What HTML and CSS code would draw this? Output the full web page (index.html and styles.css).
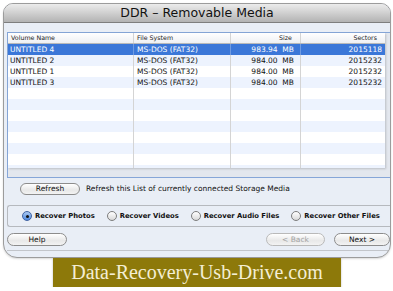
FILE: index.html
```html
<!DOCTYPE html>
<html lang="en">
<head>
    <meta charset="UTF-8">
    <title>DDR - Removable Media</title>
    <link rel="stylesheet" href="styles.css">
</head>
<body>
    <div class="window">
        <div class="titlebar">DDR &ndash; Removable Media</div>
        <div class="content">
            <div class="list-frame">
                <div class="list">
                    <div class="row head">
                        <div class="cell">Volume Name</div>
                        <div class="cell">File System</div>
                        <div class="cell num">Size</div>
                        <div class="cell num last">Sectors</div>
                    </div>
                    <div class="rows">
                        <div class="row selected">
                            <div class="cell">UNTITLED 4</div>
                            <div class="cell">MS-DOS (FAT32)</div>
                            <div class="cell num">983.94  MB</div>
                            <div class="cell num last">2015118</div>
                        </div>
                        <div class="row">
                            <div class="cell">UNTITLED 2</div>
                            <div class="cell">MS-DOS (FAT32)</div>
                            <div class="cell num">984.00  MB</div>
                            <div class="cell num last">2015232</div>
                        </div>
                        <div class="row">
                            <div class="cell">UNTITLED 1</div>
                            <div class="cell">MS-DOS (FAT32)</div>
                            <div class="cell num">984.00  MB</div>
                            <div class="cell num last">2015232</div>
                        </div>
                        <div class="row">
                            <div class="cell">UNTITLED 3</div>
                            <div class="cell">MS-DOS (FAT32)</div>
                            <div class="cell num">984.00  MB</div>
                            <div class="cell num last">2015232</div>
                        </div>
                        <div class="row"><div class="cell"></div><div class="cell"></div><div class="cell"></div><div class="cell last"></div></div>
                        <div class="row"><div class="cell"></div><div class="cell"></div><div class="cell"></div><div class="cell last"></div></div>
                        <div class="row"><div class="cell"></div><div class="cell"></div><div class="cell"></div><div class="cell last"></div></div>
                        <div class="row"><div class="cell"></div><div class="cell"></div><div class="cell"></div><div class="cell last"></div></div>
                        <div class="row"><div class="cell"></div><div class="cell"></div><div class="cell"></div><div class="cell last"></div></div>
                        <div class="row"><div class="cell"></div><div class="cell"></div><div class="cell"></div><div class="cell last"></div></div>
                        <div class="row"><div class="cell"></div><div class="cell"></div><div class="cell"></div><div class="cell last"></div></div>
                        <div class="row"><div class="cell"></div><div class="cell"></div><div class="cell"></div><div class="cell last"></div></div>
                    </div>
                </div>
            </div>

            <div class="refresh-row">
                <button class="btn refresh">Refresh</button>
                <span class="hint">Refresh this List of currently connected Storage Media</span>
            </div>

            <div class="options">
                <label class="option"><span class="radio checked"></span>Recover Photos</label>
                <label class="option"><span class="radio"></span>Recover Videos</label>
                <label class="option"><span class="radio"></span>Recover Audio Files</label>
                <label class="option"><span class="radio"></span>Recover Other Files</label>
            </div>

            <div class="nav">
                <button class="btn help">Help</button>
                <div class="nav-right">
                    <button class="btn back" disabled>&lt; Back</button>
                    <button class="btn next">Next &gt;</button>
                </div>
            </div>
            <div class="footer-line"></div>
        </div>
    </div>
    <div class="banner">Data-Recovery-Usb-Drive.com</div>
</body>
</html>
```
FILE: styles.css
```css
body {
    margin: 0;
    padding: 3px 0 0 3px;
    background-color: #fff;
    font-family: "DejaVu Sans", sans-serif;
}

.window {
    width: 386px;
    height: 253px;
    border: 1px solid #9c9c9c;
    border-radius: 10px 10px 14px 14px;
    background-color: #e9eef6;
    overflow: hidden;
    box-shadow: 0 1px 2px rgba(0, 0, 0, 0.15);
}

.titlebar {
    height: 18px;
    line-height: 18px;
    text-align: center;
    font-size: 12.5px;
    color: #111;
    background: linear-gradient(#ececec, #b3b3b3);
    border-bottom: 1px solid #7e7e7e;
}

.content {
    padding: 9px 0 0 3px;
}

.list-frame {
    border-top: 1px solid #86a6d8;
    border-left: 1px solid #86a6d8;
    border-bottom: 1px solid #86a6d8;
    background-color: #e3e7ee;
    padding: 0 5px 9px 0;
}

.list {
    background-color: #fff;
    height: 135px;
    overflow: hidden;
    box-shadow: 1px 1px 2px rgba(0, 0, 0, 0.18);
}

.row {
    display: grid;
    grid-template-columns: 126px 97px 70px 1fr;
    height: 11px;
    line-height: 11px;
    font-size: 7.5px;
    color: #111;
}

.rows .row:nth-child(even) {
    background-color: #edf3fe;
}

.row.selected {
    background-color: #3b77d8;
    color: #fff;
}

.cell {
    border-right: 1px solid #d4d4d4;
    padding-left: 2px;
    white-space: pre;
    overflow: hidden;
}

.cell:nth-child(2) {
    padding-left: 3px;
}

.cell.num {
    text-align: right;
    padding-right: 6px;
}

.cell.last {
    border-right: none;
    padding-right: 3px;
}

.row.selected .cell {
    border-right-color: #6f9be2;
}

.row.head {
    font-size: 6.3px;
    color: #1a1a1a;
    background: linear-gradient(#fff, #eef0f3);
    border-bottom: 1px solid #b9b9b9;
    height: 10px;
    line-height: 10px;
}

.row.head .cell {
    padding-left: 3px;
}

.row.head .cell.num {
    padding-right: 8px;
}

.btn {
    font-family: "DejaVu Sans", sans-serif;
    font-size: 7.5px;
    color: #111;
    height: 13px;
    padding: 0;
    border: 1px solid #8c8c8c;
    border-radius: 7px;
    background: linear-gradient(#ffffff, #e8e8e8 60%, #f3f3f3);
}

.refresh-row {
    display: flex;
    align-items: center;
    margin-top: 4px;
    padding-left: 13px;
    height: 13px;
}

.refresh {
    width: 60px;
    height: 12px;
}

.hint {
    margin-left: 6px;
    font-size: 7.5px;
    color: #111;
}

.options {
    display: flex;
    align-items: center;
    gap: 12px;
    margin-top: 10px;
    height: 20px;
    padding-left: 14px;
    border: 1px solid #b6b9be;
    border-right: none;
    border-radius: 3px 0 0 3px;
    white-space: nowrap;
    overflow: hidden;
}

.option {
    display: flex;
    flex-shrink: 0;
    align-items: center;
    gap: 3px;
    font-size: 6.8px;
    font-weight: bold;
    color: #111;
}

.radio {
    width: 8px;
    height: 8px;
    border: 1px solid #7d7d7d;
    border-radius: 50%;
    background: linear-gradient(#fff, #d9d9d9);
    position: relative;
}

.radio.checked {
    border-color: #3f62a2;
    background: linear-gradient(#a9c8f2, #4f8ae0);
}

.radio.checked::after {
    content: "";
    position: absolute;
    left: 2.5px;
    top: 2.5px;
    width: 3px;
    height: 3px;
    border-radius: 50%;
    background-color: #111;
}

.nav {
    display: flex;
    justify-content: space-between;
    margin-top: 6px;
}

.help {
    width: 60px;
}

.nav-right {
    display: flex;
    gap: 9px;
}

.back {
    width: 59px;
    color: #a3a3a3;
    border-color: #b9b9b9;
}

.next {
    width: 56px;
}

.footer-line {
    margin-top: 4px;
    border-top: 1px solid #c2c5ca;
}

.banner {
    margin-left: 50px;
    width: 288px;
    height: 29px;
    line-height: 29px;
    background-color: #8d790a;
    color: #f4eed4;
    font-family: "Liberation Serif", serif;
    font-size: 20px;
    text-align: center;
    box-shadow: 0 1px 2px rgba(0, 0, 0, 0.25);
}
```
